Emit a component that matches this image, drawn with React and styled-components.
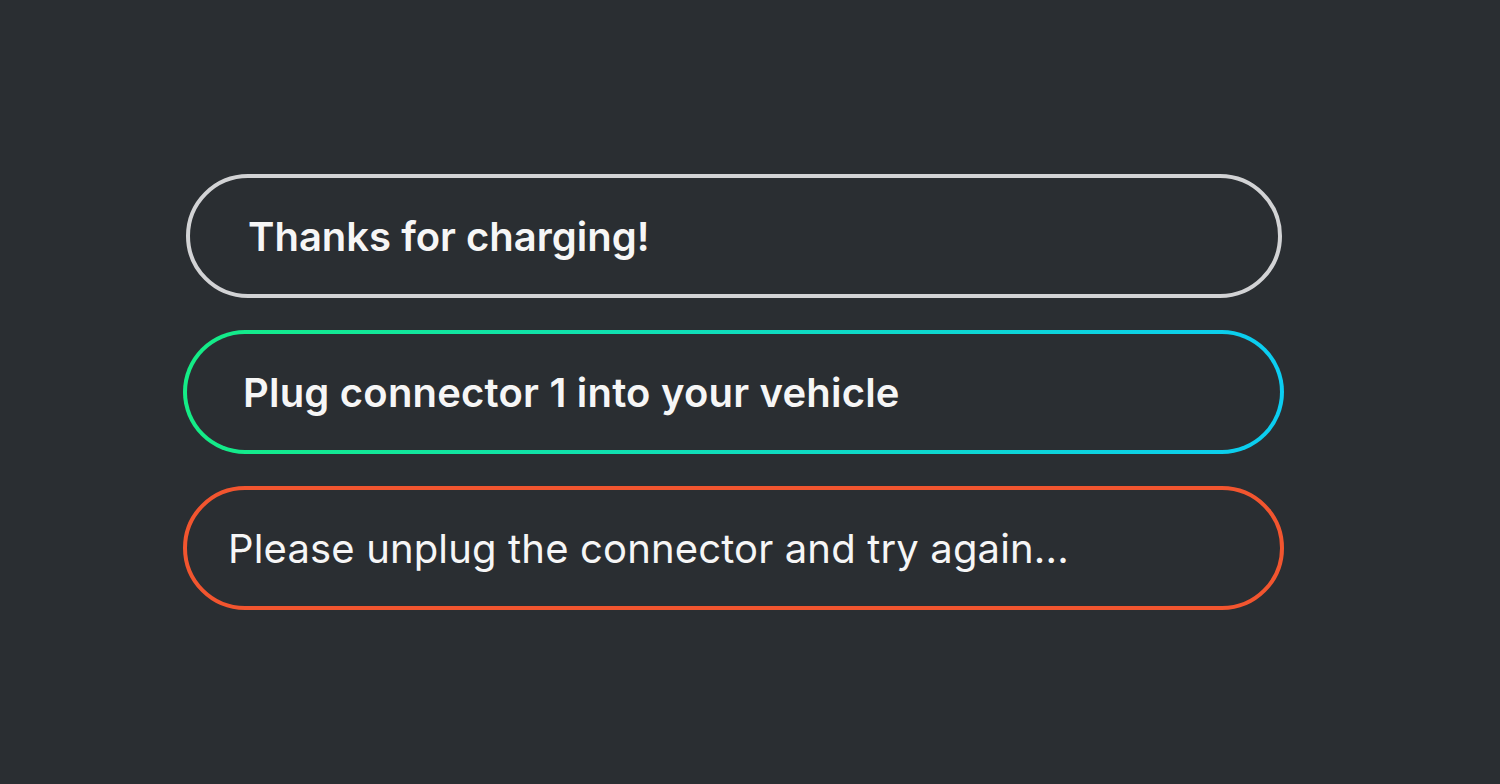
import React from "react";
import styled, { createGlobalStyle, css } from "styled-components";

const GlobalStyle = createGlobalStyle`
  html, body {
    margin: 0;
    padding: 0;
    background: #2a2e32;
  }
  body {
    font-family: Inter, "Noto Sans", "Liberation Sans", sans-serif;
  }
`;

const Page = styled.div`
  width: 1500px;
  height: 784px;
  box-sizing: border-box;
  padding: 174px 0 0 183px;
  display: flex;
  flex-direction: column;
  gap: 32px;
`;

const variants = {
  neutral: css`
    border: 4px solid #d2d3d5;
    background: #2a2e32;
  `,
  active: css`
    border: 4px solid transparent;
    background:
      linear-gradient(#2a2e32, #2a2e32) padding-box,
      linear-gradient(90deg, #14ec86 0%, #0bcdf2 100%) border-box;
  `,
  error: css`
    border: 4px solid #f2552f;
    background: #2a2e32;
  `,
};

const Pill = styled.div`
  box-sizing: border-box;
  width: ${(p) => p.$width}px;
  height: 124px;
  margin-left: ${(p) => p.$inset || 0}px;
  border-radius: 62px;
  display: flex;
  align-items: center;
  padding-left: ${(p) => p.$padLeft}px;
  ${(p) => variants[p.$variant]}
`;

const Label = styled.span`
  color: #f6f6f6;
  font-size: 40px;
  font-weight: ${(p) => (p.$bold ? 600 : 400)};
  letter-spacing: ${(p) => p.$tracking || 0}px;
  white-space: nowrap;
`;

export default function App() {
  return (
    <>
      <GlobalStyle />
      <Page>
        <Pill $variant="neutral" $width={1096} $inset={3} $padLeft={58}>
          <Label $bold>Thanks for charging!</Label>
        </Pill>
        <Pill $variant="active" $width={1101} $padLeft={56}>
          <Label $bold $tracking={0.2}>Plug connector 1 into your vehicle</Label>
        </Pill>
        <Pill $variant="error" $width={1101} $padLeft={41}>
          <Label $tracking={0.15}>Please unplug the connector and try again...</Label>
        </Pill>
      </Page>
    </>
  );
}
